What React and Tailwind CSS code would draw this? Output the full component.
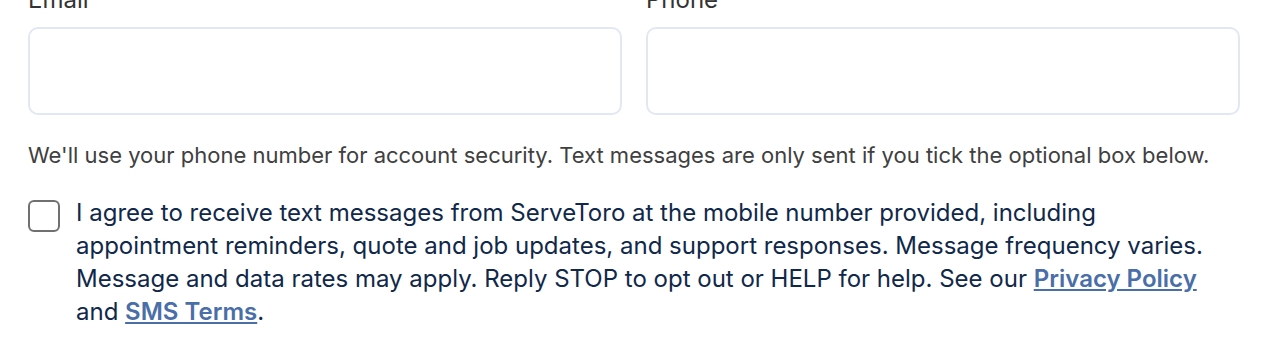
export default function App() {
  return (
    <div className="bg-white min-h-[356px] px-[28px] overflow-hidden" style={{ fontFamily: 'Inter, sans-serif' }}>
      <div className="-mt-[15px] grid grid-cols-2 gap-[24px]">
        <div>
          <label className="block text-[24px] leading-[30px] text-[#333] mb-[12px]">Email</label>
          <input className="block w-full h-[88px] rounded-[10px] border-2 border-[#e2e8f3] bg-white outline-none" />
        </div>
        <div>
          <label className="block text-[24px] leading-[30px] text-[#333] mb-[12px]">Phone</label>
          <input className="block w-full h-[88px] rounded-[10px] border-2 border-[#e2e8f3] bg-white outline-none" />
        </div>
      </div>

      <p className="mt-[26px] text-[22px] leading-[28px] text-[#404040]">
        We'll use your phone number for account security. Text messages are only sent if you tick the optional box below.
      </p>

      <label className="mt-[27px] flex items-start gap-[16px]">
        <span className="mt-[4px] shrink-0 w-[32px] h-[32px] rounded-[6px] border-2 border-[#707070] bg-white" />
        <span className="block flex-1 text-[24px] leading-[33px] text-[#10284a]">
          I agree to receive text messages from ServeToro at the mobile number provided, including appointment reminders,
          quote and job updates, and support responses. Message frequency varies. Message and data rates may apply. Reply
          STOP to opt out or HELP for help. See our{' '}
          <a href="#" className="font-semibold text-[#4a6ea8] underline underline-offset-2">Privacy Policy</a> and{' '}
          <a href="#" className="font-semibold text-[#4a6ea8] underline underline-offset-2">SMS Terms</a>.
        </span>
      </label>
    </div>
  );
}
